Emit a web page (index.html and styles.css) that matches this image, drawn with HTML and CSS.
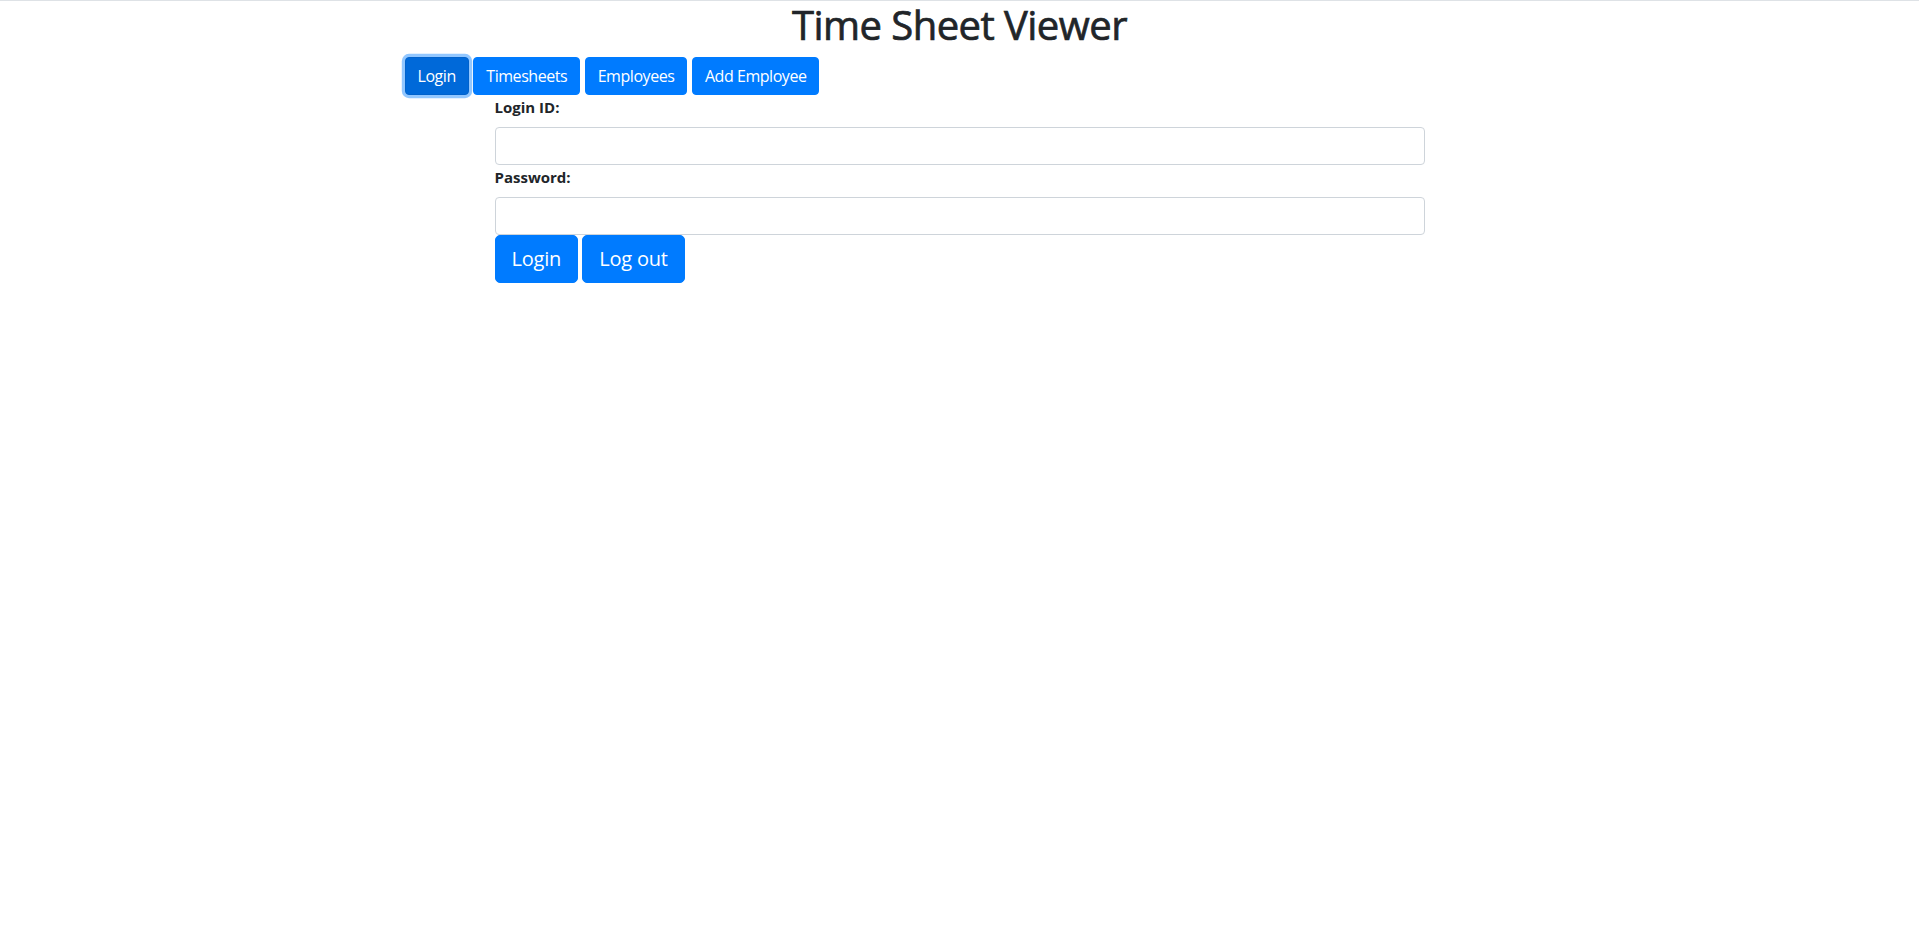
FILE: index.html
```html
<!DOCTYPE html>
<html lang="en">
<head>
<meta charset="utf-8">
<title>Time Sheet Viewer</title>
<link rel="stylesheet" href="styles.css">
</head>
<body>
<div class="container">
  <h1 class="title">Time Sheet Viewer</h1>
  <nav class="nav">
    <button class="btn btn-primary is-active" type="button">Login</button>
    <button class="btn btn-primary" type="button">Timesheets</button>
    <button class="btn btn-primary" type="button">Employees</button>
    <button class="btn btn-primary" type="button">Add Employee</button>
  </nav>
  <form class="login-form">
    <label class="field-label" for="loginId">Login ID:</label>
    <input class="form-control" id="loginId" type="text">
    <label class="field-label" for="password">Password:</label>
    <input class="form-control" id="password" type="password">
    <div class="actions">
      <button class="btn btn-primary btn-lg" type="button">Login</button>
      <button class="btn btn-primary btn-lg" type="button">Log out</button>
    </div>
  </form>
</div>
</body>
</html>
```

FILE: styles.css
```css
* { box-sizing: border-box; }

html, body {
  margin: 0;
  padding: 0;
  background: #fff;
}

body {
  border-top: 1px solid #dee2e6;
  font-family: "Open Sans", "Noto Sans", "Liberation Sans", sans-serif;
  font-size: 16px;
  line-height: 1.5;
  color: #212529;
}

.container {
  max-width: 1140px;
  margin: 0 auto;
  padding: 0 15px;
}

.title {
  margin: 0 0 8px;
  font-size: 40px;
  font-weight: 500;
  line-height: 48px;
  letter-spacing: -0.55px;
  text-align: center;
  color: #212529;
  -webkit-text-stroke: 0.7px #212529;
}

.nav {
  display: flex;
  gap: 4.5px;
}

.btn {
  display: inline-block;
  font-family: inherit;
  font-size: 16px;
  line-height: 24px;
  font-weight: 400;
  padding: 6px 12px;
  border: 1px solid transparent;
  border-radius: 4px;
  cursor: pointer;
}

.nav .btn {
  letter-spacing: -0.45px;
}

.btn-primary {
  color: #fff;
  background: #007bff;
  border-color: #007bff;
}

.btn-primary.is-active {
  background: #0069d9;
  border-color: #0062cc;
  box-shadow: 0 0 0 3.2px rgba(38, 143, 255, 0.5);
}

.btn-lg {
  font-size: 20px;
  line-height: 30px;
  padding: 8px 16px;
  border-radius: 5px;
  letter-spacing: -0.2px;
}

.login-form {
  display: flex;
  flex-direction: column;
  align-items: stretch;
  padding: 0 90px;
}

.field-label {
  font-size: 15px;
  font-weight: 700;
  line-height: 24px;
  margin-bottom: 8px;
}

.form-control {
  display: block;
  width: 100%;
  height: 38px;
  padding: 6px 12px;
  font-family: inherit;
  font-size: 16px;
  color: #495057;
  background: #fff;
  border: 1px solid #ced4da;
  border-radius: 4px;
}

.actions {
  display: flex;
  gap: 4px;
}
```
